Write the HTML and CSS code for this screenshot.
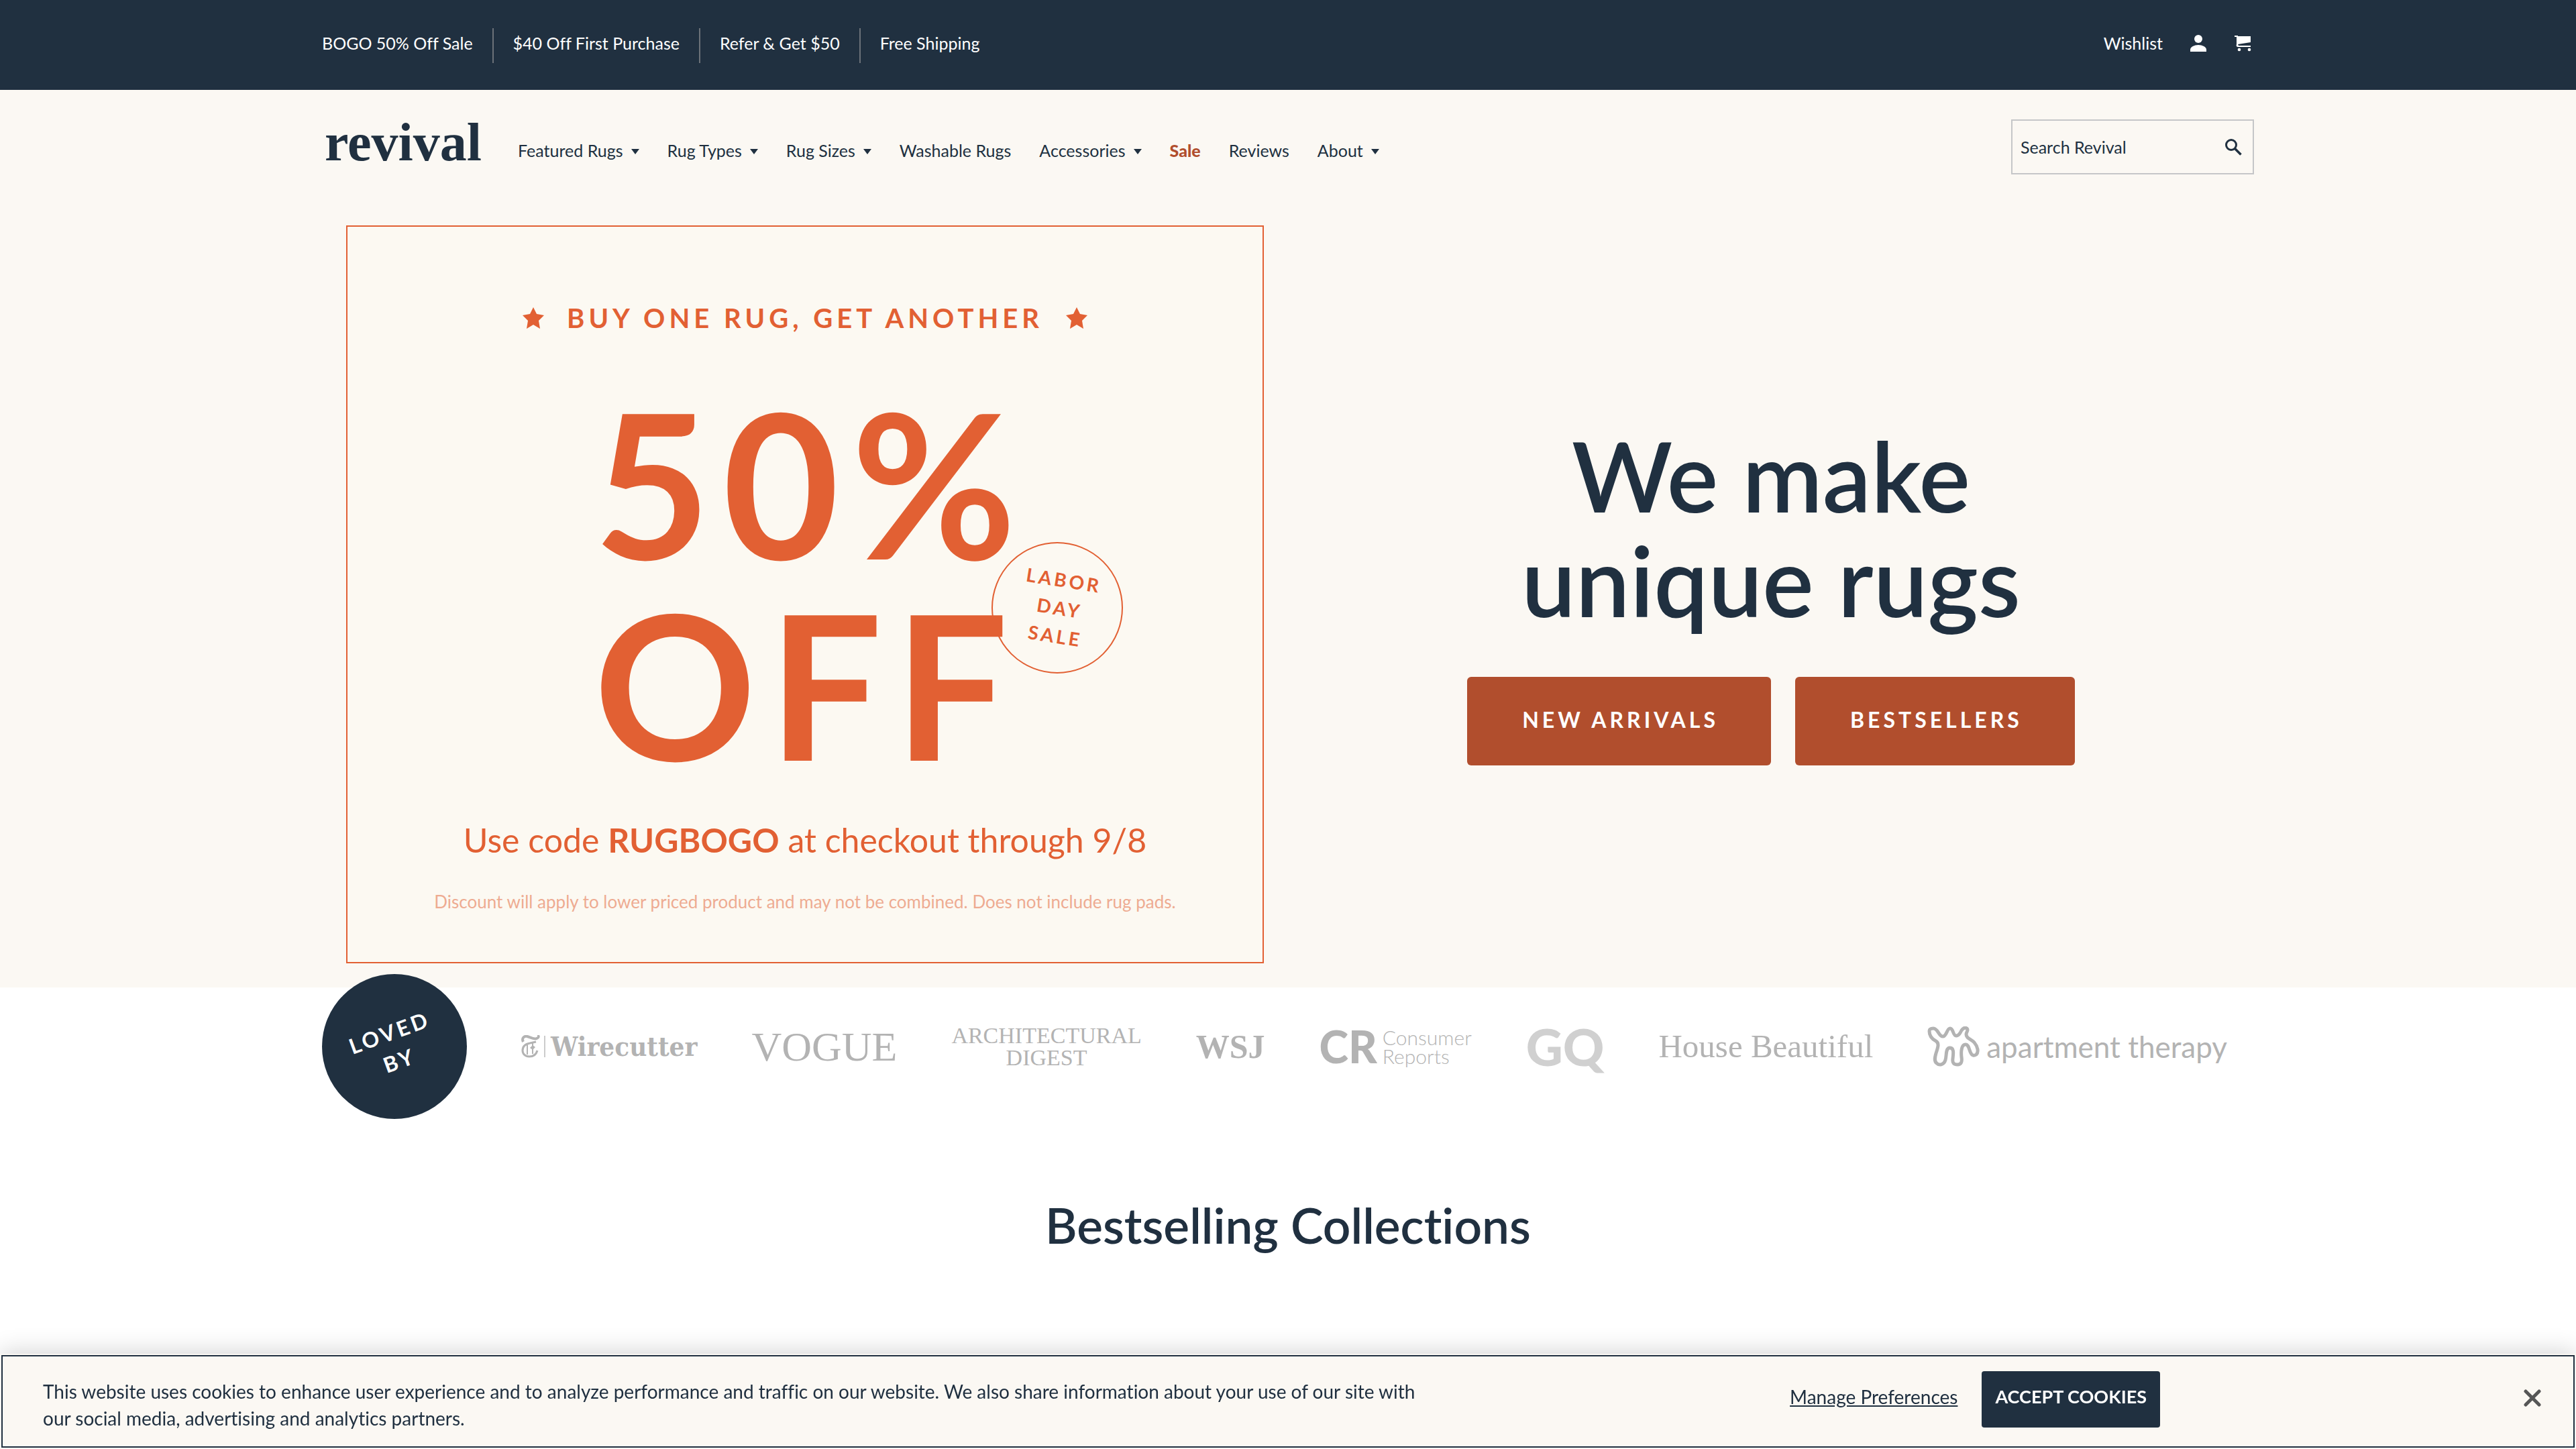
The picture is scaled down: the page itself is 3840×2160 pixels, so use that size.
FILE: index.html
```html
<!DOCTYPE html>
<html lang="en">
<head>
    <meta charset="utf-8">
    <title>Revival Rugs</title>
    <link rel="stylesheet" href="styles.css">
</head>
<body>
    <div class="topbar">
        <div class="container topbar-inner">
            <ul class="promos">
                <li><a href="#">BOGO 50% Off Sale</a></li>
                <li><a href="#">$40 Off First Purchase</a></li>
                <li><a href="#">Refer &amp; Get $50</a></li>
                <li><a href="#">Free Shipping</a></li>
            </ul>
            <div class="account">
                <a href="#">Wishlist</a>
                <a href="#" aria-label="Account">
                    <svg width="26" height="26" viewBox="0 0 26 26" fill="#fff"><circle cx="13" cy="7" r="6"/><path d="M1 26v-3c0-4 6-7 12-7s12 3 12 7v3z"/></svg>
                </a>
                <a href="#" aria-label="Cart">
                    <svg width="26" height="26" viewBox="0 0 26 26" fill="#fff"><path d="M1 2h5v1h19v9L6 15l1 2h18v2H6c-2 0-3-2-2-4L4 4H1z"/><circle cx="8" cy="23" r="2.3"/><circle cx="23" cy="23" r="2.3"/></svg>
                </a>
            </div>
        </div>
    </div>

    <header class="header">
        <div class="container header-inner">
            <a href="#" class="logo">revival</a>
            <nav class="nav">
                <a href="#" class="has-menu">Featured Rugs</a>
                <a href="#" class="has-menu">Rug Types</a>
                <a href="#" class="has-menu">Rug Sizes</a>
                <a href="#">Washable Rugs</a>
                <a href="#" class="has-menu">Accessories</a>
                <a href="#" class="sale">Sale</a>
                <a href="#">Reviews</a>
                <a href="#" class="has-menu">About</a>
            </nav>
            <form class="search">
                <input type="text" placeholder="Search Revival" aria-label="Search Revival">
                <button type="button" aria-label="Search">
                    <svg width="26" height="26" viewBox="0 0 26 26" fill="none" stroke="#203040" stroke-width="3"><circle cx="10" cy="10" r="7.5"/><path d="M15.5 15.5l9 9" stroke-width="3.6"/></svg>
                </button>
            </form>
        </div>
    </header>

    <section class="hero">
        <div class="container hero-inner">
            <div class="hero-left">
                <div class="offer">
                    <p class="offer-top">
                        <svg class="star" viewBox="0 0 32 32"><path d="M16 0l5 10 11 2-8 8 2 12-10-6-10 6 2-12-8-8 11-2z"/></svg>
                        <span>BUY ONE RUG, GET ANOTHER</span>
                        <svg class="star" viewBox="0 0 32 32"><path d="M16 0l5 10 11 2-8 8 2 12-10-6-10 6 2-12-8-8 11-2z"/></svg>
                    </p>
                    <div class="offer-big">
                        <div class="badge"><span>LABOR<br>DAY<br>SALE</span></div>
                        <h2>50%<br>OFF</h2>
                    </div>
                    <p class="offer-code">Use code <b>RUGBOGO</b> at checkout through 9/8</p>
                    <p class="offer-note">Discount will apply to lower priced product and may not be combined. Does not include rug pads.</p>
                </div>
            </div>
            <div class="hero-right">
                <h1>We make<br>unique rugs</h1>
                <div class="hero-buttons">
                    <a href="#" class="btn">NEW ARRIVALS</a>
                    <a href="#" class="btn">BESTSELLERS</a>
                </div>
            </div>
        </div>
    </section>

    <section class="container press">
        <div class="loved"><span>LOVED<br>BY</span></div>
        <div class="brand wirecutter">
            <svg width="28" height="34" viewBox="0 0 28 34" fill="none" stroke="#b3b3b3"><path d="M3 10C0 4 5 1 9 2s10 5 14 3 3-4 1-4" stroke-width="4"/><path d="M24 23c-2 7-7 9-12 9-6 0-10-4-10-9 0-7 5-10 11-11l9-2" stroke-width="3"/><path d="M9 13v16M17 11v17" stroke-width="2"/><path d="M13 19l4-4 4 3-4 4z" fill="#b3b3b3" stroke="none"/></svg>
            <span>Wirecutter</span>
        </div>
        <div class="brand vogue">VOGUE</div>
        <div class="brand digest">ARCHITECTURAL<br>DIGEST</div>
        <div class="brand wsj">WSJ</div>
        <div class="brand reports"><b>CR</b><span>Consumer<br>Reports</span></div>
        <div class="brand gq">GQ</div>
        <div class="brand house">House Beautiful</div>
        <div class="brand therapy">
            <svg width="78" height="60" viewBox="0 0 78 60" fill="none" stroke="#b3b3b3" stroke-width="5"><path d="M3 7C3 15 7 19 13 22C18 25 16 31 13 40C11 47 10 52 14 55C18 59 25 57 27 50C29 43 27 33 33 32C40 31 39 40 38 48C37 55 40 57 45 57C51 57 52 52 51 46C50 37 51 27 57 27C62 27 62 35 65 40C67 44 70 44 73 42C77 38 75 30 70 24C65 19 58 18 58 12C58 8 62 6 59 3C56 1 53 3 51 6C49 10 47 14 43 14C38 14 39 3 34 3C29 3 29 15 23 15C17 15 16 3 9 3C5 3 3 4 3 7z"/></svg>
            <span>apartment therapy</span>
        </div>
    </section>

    <section class="collections">
        <h2>Bestselling Collections</h2>
    </section>

    <div class="cookies">
        <p>This website uses cookies to enhance user experience and to analyze performance and traffic on our website. We also share information about your use of our site with our social media, advertising and analytics partners.</p>
        <div class="cookie-actions">
            <a href="#">Manage Preferences</a>
            <button type="button" class="accept">ACCEPT COOKIES</button>
        </div>
        <button type="button" class="close" aria-label="Close">
            <svg width="26" height="26" viewBox="0 0 26 26" stroke="#565656" stroke-width="5" stroke-linecap="round"><path d="M3 3l20 20M23 3L3 23"/></svg>
        </button>
    </div>
</body>
</html>
```
FILE: styles.css
```css
* {
    box-sizing: border-box;
}
body {
    margin: 0;
    font-family: Lato, sans-serif;
    font-size: 25px;
    line-height: 32px;
    font-variant-ligatures: none;
    color: #203040;
    background-color: #fff;
}
a {
    color: inherit;
    text-decoration: none;
}
h1, h2, p, ul {
    margin: 0;
    padding: 0;
}
button {
    border: none;
    background: none;
    padding: 0;
    font-family: inherit;
    cursor: pointer;
}
svg {
    display: block;
}
.container {
    width: 75%;
    margin: 0 auto;
}

/* top bar */
.topbar {
    background-color: #203040;
    color: #fff;
    padding: 42px 0 40px;
}
.topbar-inner {
    display: flex;
    justify-content: space-between;
}
.promos {
    display: flex;
    list-style: none;
}
.promos li {
    height: 52px;
    padding: 6px 29px;
    border-left: 2px solid #6b7178;
}
.promos li:first-child {
    padding-left: 0;
    border-left: none;
}
.account {
    display: flex;
    align-items: center;
    gap: 40px;
    height: 44px;
    padding-right: 4px;
}

/* header */
.header {
    background-color: #fbf8f3;
}
.header-inner {
    display: flex;
    height: 166px;
    padding-top: 44px;
}
.logo {
    font-family: "Liberation Serif", serif;
    font-weight: bold;
    font-size: 80px;
    line-height: 68px;
    margin: 0 54px 0 4px;
}
.nav {
    display: flex;
    gap: 42px;
    padding-top: 30px;
}
.nav .has-menu::after {
    content: "";
    display: inline-block;
    margin-left: 12px;
    border: 6px solid transparent;
    border-top: 8px solid #203040;
    border-bottom: none;
    vertical-align: 4px;
}
.nav .sale {
    color: #b14e2d;
    font-weight: 900;
}
.search {
    display: flex;
    align-items: center;
    width: 362px;
    height: 82px;
    margin-left: auto;
    padding: 0 16px 0 12px;
    border: 2px solid #c5c6c8;
}
.search input {
    flex: 1;
    min-width: 0;
    border: none;
    padding: 0;
    background: none;
    font: inherit;
    color: inherit;
}
.search input::placeholder {
    color: #203040;
    opacity: 1;
}

/* hero */
.hero {
    background-color: #fbf8f3;
}
.hero-inner {
    display: grid;
    grid-template-columns: 1fr 1fr;
}
.hero-left {
    padding: 36px;
}
.offer {
    height: 1100px;
    padding-top: 108px;
    border: 2px solid #e26033;
    background-color: #fcf9f2;
    color: #e26033;
    text-align: center;
}
.offer-top {
    display: flex;
    justify-content: center;
    align-items: center;
    gap: 34px;
    font-size: 40px;
    line-height: 56px;
    font-weight: bold;
    letter-spacing: 6px;
}
.star {
    width: 32px;
    height: 32px;
    fill: #e26033;
}
.offer-big {
    position: relative;
    display: inline-block;
    margin-top: 66px;
    text-align: left;
}
.offer-big h2 {
    position: relative;
    margin-right: -18px;
    font-size: 300px;
    line-height: 300px;
    font-weight: bold;
    letter-spacing: 18px;
}
.badge {
    position: absolute;
    top: 240px;
    left: 593px;
    display: flex;
    align-items: center;
    justify-content: center;
    width: 196px;
    height: 196px;
    padding-left: 6px;
    border: 2px solid #e26033;
    border-radius: 50%;
    font-size: 28px;
    line-height: 42px;
    font-weight: bold;
    letter-spacing: 4px;
    text-align: center;
}
.badge span {
    transform: rotate(9deg);
}
.offer-code {
    margin-top: 52px;
    font-size: 50px;
    line-height: 64px;
}
.offer-note {
    margin-top: 44px;
    font-size: 26px;
    opacity: 0.5;
}
.hero-right {
    display: flex;
    flex-direction: column;
    align-items: center;
    justify-content: center;
    text-align: center;
}
.hero-right h1 {
    font-size: 144px;
    line-height: 156px;
    font-weight: 600;
}
.hero-buttons {
    display: flex;
    gap: 36px;
    margin-top: 66px;
}
.btn {
    padding: 40px 78px 44px 82px;
    border-radius: 6px;
    background-color: #b14e2d;
    color: #fff;
    font-size: 32px;
    line-height: 48px;
    font-weight: bold;
    letter-spacing: 5px;
}

/* press logos */
.press {
    position: relative;
    display: flex;
    align-items: center;
    justify-content: space-between;
    margin-top: -20px;
    padding-right: 40px;
    color: #b3b3b3;
}
.loved {
    display: flex;
    align-items: center;
    justify-content: center;
    width: 216px;
    height: 216px;
    border-radius: 50%;
    background-color: #203040;
    color: #fff;
    font-size: 32px;
    line-height: 44px;
    font-weight: bold;
    letter-spacing: 4px;
    text-align: center;
}
.loved span {
    transform: rotate(-20deg);
}
.brand {
    font-family: "Liberation Serif", serif;
    white-space: nowrap;
}
.wirecutter {
    display: flex;
    align-items: center;
    gap: 6px;
}
.wirecutter span {
    padding-left: 8px;
    border-left: 2px solid #ccc;
    font-family: "DejaVu Serif Condensed", "DejaVu Serif", serif;
    font-weight: bold;
    font-size: 40px;
    line-height: 32px;
}
.vogue {
    font-size: 62px;
}
.digest {
    font-size: 34px;
    line-height: 33px;
    text-align: center;
}
.wsj {
    font-size: 50px;
    font-weight: bold;
}
.reports {
    display: flex;
    align-items: center;
    gap: 8px;
    font-family: Lato, sans-serif;
}
.reports b {
    font-size: 66px;
    font-weight: 900;
}
.reports span {
    font-size: 30px;
    line-height: 28px;
    font-weight: 300;
}
.gq {
    font-family: Lato, sans-serif;
    font-size: 76px;
    font-weight: 900;
    color: #d0d0d0;
}
.house {
    font-size: 49px;
}
.therapy {
    display: flex;
    align-items: center;
    gap: 10px;
    font-family: Lato, sans-serif;
    font-size: 44px;
}

.collections {
    padding: 112px 0 300px;
    text-align: center;
}
.collections h2 {
    font-size: 73px;
    line-height: 92px;
    font-weight: 600;
}

/* cookie banner */
.cookies {
    position: fixed;
    left: 0;
    right: 0;
    bottom: 0;
    display: flex;
    height: 142px;
    background-color: #fbf8f3;
    outline: 2px solid #203040;
    outline-offset: -4px;
    box-shadow: 0 0 36px rgba(0, 0, 0, 0.2);
    font-size: 27px;
    line-height: 40px;
}
.cookies p {
    width: 55%;
    padding: 36px 0 0 64px;
    font-size: 28px;
}
.cookie-actions {
    display: flex;
    align-items: flex-start;
    gap: 36px;
    margin-left: auto;
    padding-top: 26px;
}
.cookie-actions a {
    padding-top: 18px;
    font-size: 28px;
    text-decoration: underline;
}
.accept {
    height: 84px;
    padding: 0 20px 10px;
    border-radius: 4px;
    background-color: #203040;
    color: #fff;
    font-size: 27px;
    font-weight: bold;
}
.close {
    align-self: flex-start;
    margin: 53px 52px 0 542px;
}
```
